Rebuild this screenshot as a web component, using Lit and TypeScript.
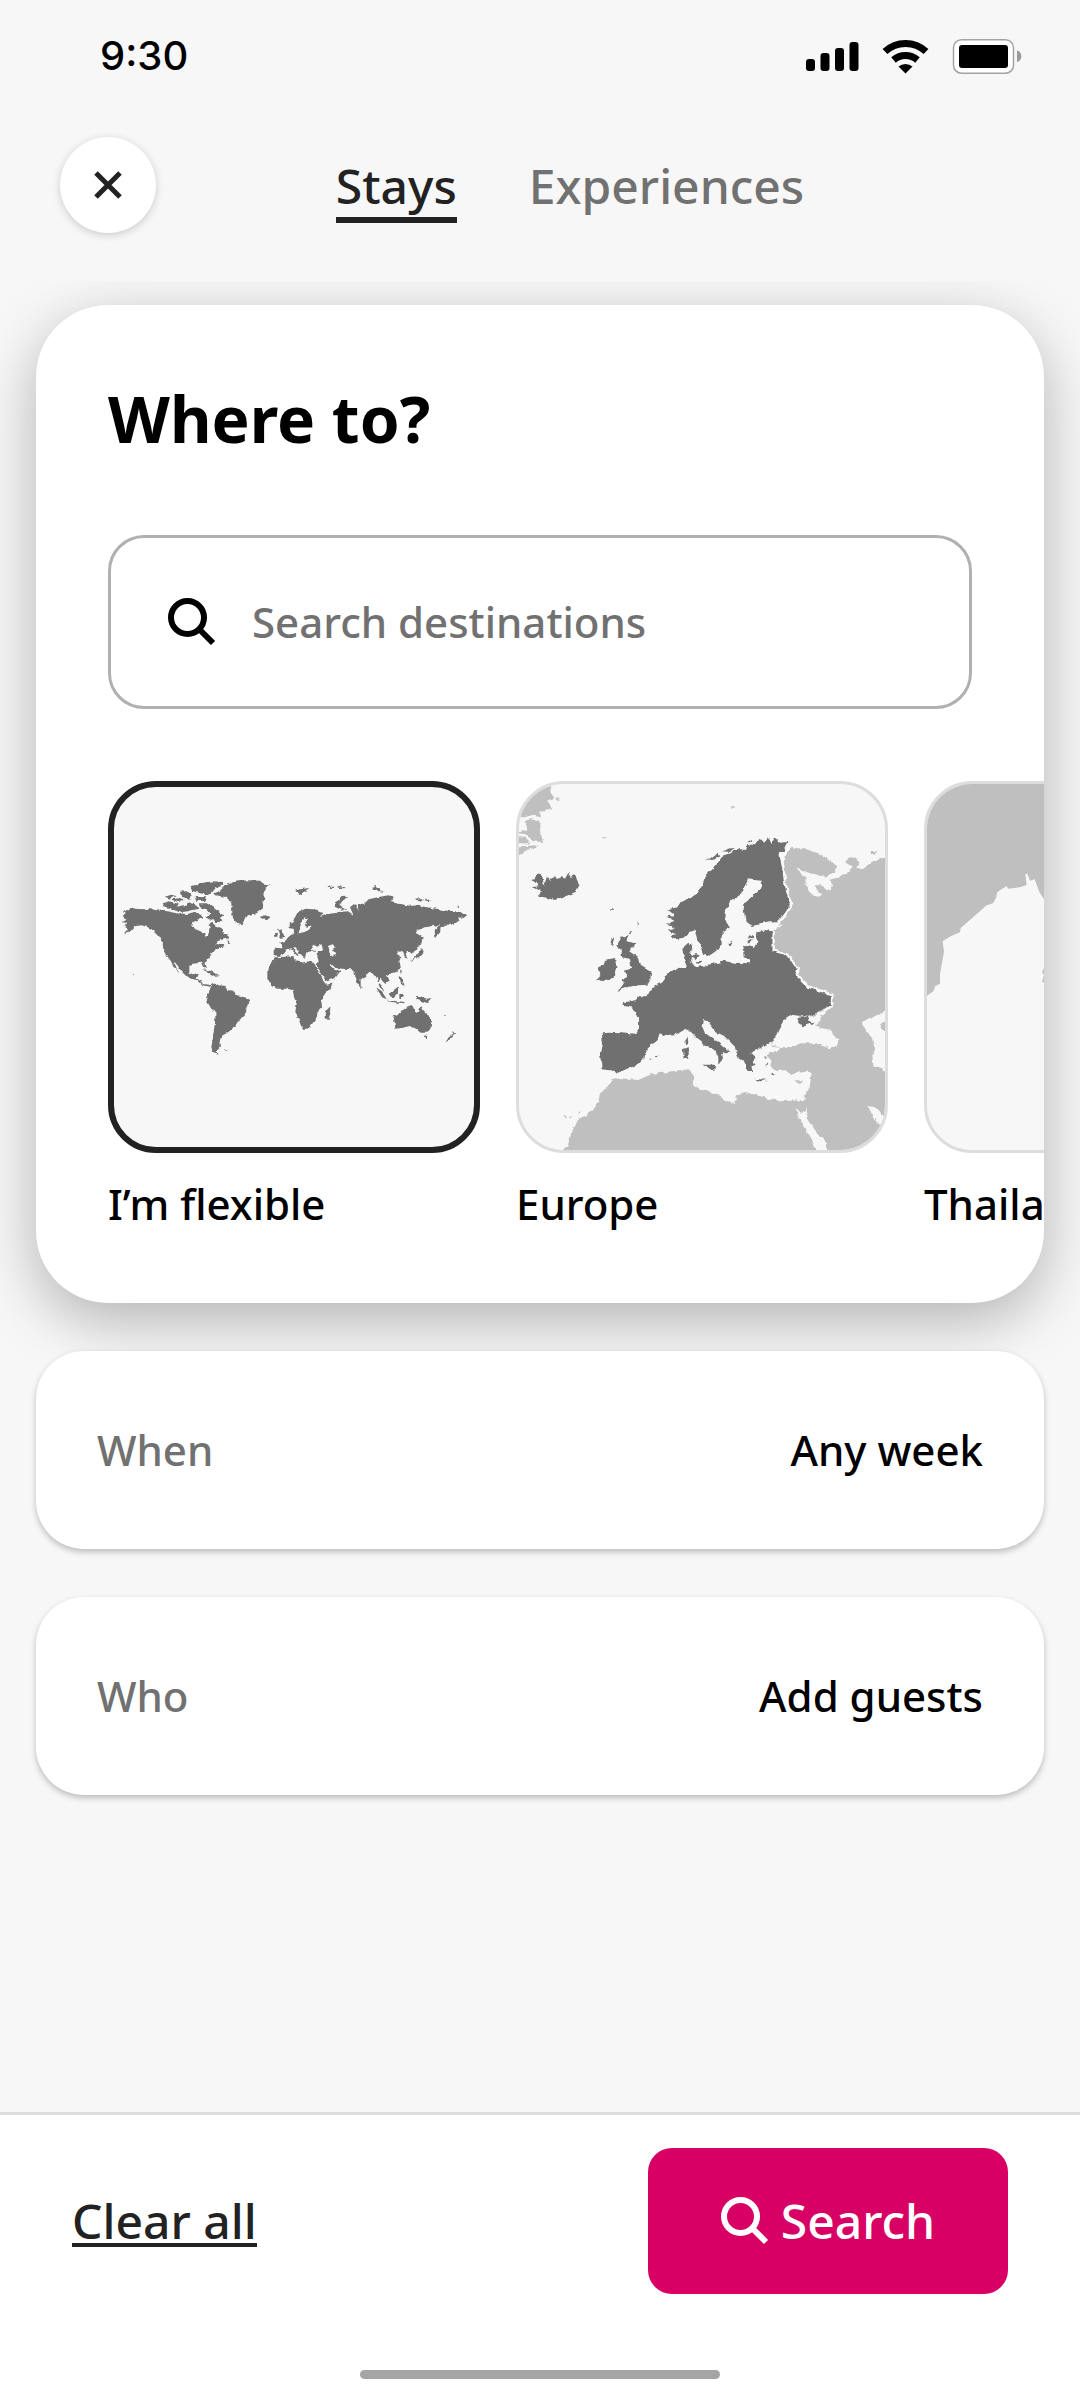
import { LitElement, html, svg, css } from "lit";
import { customElement, property, state } from "lit/decorators.js";
import { classMap } from "lit/directives/class-map.js";

const worldMap = svg`
  <svg class="map" viewBox="42 51 1080 1080" aria-hidden="true">
    <defs>
      <filter id="coast" x="0" y="0" width="1" height="1" color-interpolation-filters="sRGB">
        <feTurbulence type="fractalNoise" baseFrequency="0.07" numOctaves="2" seed="4" />
        <feDisplacementMap in="SourceGraphic" scale="12" xChannelSelector="R" yChannelSelector="G" />
      </filter>
    </defs>
    <g filter="url(#coast)">
      <g fill="#707070">
        <path d="M66 425 80 422 98 413 112 417 150 418 180 422 200 424 230 430 262 432 285 425 300 432 308 445 292 450 280 456 276 470 292 480 312 488 316 500 324 498 326 484 332 472 326 460 334 456 350 470 362 474 368 486 380 490 388 504 372 508 352 514 346 524 360 518 374 528 358 534 346 540 334 550 328 562 318 574 314 582 318 596 312 590 306 578 290 580 274 582 268 596 268 610 278 616 288 610 296 612 290 626 304 632 308 642 326 644 338 646 326 650 308 646 296 632 276 626 256 616 244 604 232 586 222 574 228 590 238 606 222 592 212 572 196 552 190 540 188 520 180 502 168 488 156 478 140 470 120 466 104 470 90 484 72 490 84 476 70 468 80 462 68 456 82 448 66 438 82 432Z" />
        <path d="M380 510 394 516 388 522Z" />
        <path d="M345 376 340 370 360 362 374 348 400 336 440 331 484 332 492 344 514 346 496 356 490 372 496 384 488 398 490 414 472 428 444 436 434 448 424 466 410 460 398 440 396 420 398 408 390 392 376 380Z" />
        <path d="M272 352 300 340 340 334 370 336 366 346 344 358 330 374 310 372 296 368 276 364Z" />
        <path d="M194 380 214 374 228 378 210 386ZM240 366 264 362 278 376 268 386 244 380ZM214 388 240 384 256 392 236 396ZM284 380 318 382 314 394 288 392ZM188 400 210 394 236 402 230 410 260 404 264 396 290 404 298 416 280 420 250 426 220 418 194 410Z" />
        <path d="M296 400 320 400 340 412 356 426 370 436 360 444 368 456 350 456 330 448 316 440 332 430 318 418 300 412Z" />
        <path d="M480 440 496 436 510 442 502 450 484 448ZM584 362 600 358 628 354 614 364 604 376 596 370ZM682 350 702 350 702 354 684 354ZM712 348 738 350 732 355 714 353ZM816 354 828 347 836 356 854 368 836 366ZM948 386 964 384 972 390 958 396ZM976 389 988 389 988 393 976 393ZM1070 410 1080 411 1078 415Z" />
        <path d="M704 410 710 392 724 382 748 379 732 389 718 398 724 412 742 420 720 418Z" />
        <path d="M306 598 324 600 342 610 360 616 344 618 326 608Z" />
        <path d="M318 684 330 658 334 644 346 640 356 646 376 648 384 660 400 662 406 674 428 680 448 690 446 706 436 720 434 738 418 746 406 768 390 782 380 790 368 796 362 808 358 820 360 832 350 844 356 854 340 850 334 832 338 806 342 780 346 750 346 726 334 716 324 700Z" />
        <path d="M502 598 514 576 528 562 556 560 580 558 584 570 606 578 620 574 644 578 648 592 660 612 672 636 680 644 698 640 690 658 676 674 662 690 666 708 652 728 650 744 636 766 622 776 606 776 596 748 586 726 590 700 582 682 578 660 560 656 530 656 512 644 502 626Z" />
        <path d="M678 722 690 710 694 720 686 746 677 746Z" />
        <path d="M566 474 566 460 580 452 592 428 616 416 640 418 668 430 660 440 690 432 716 426 744 424 760 434 750 412 762 402 776 420 772 402 790 404 806 388 840 380 866 376 878 384 872 396 900 402 930 408 950 406 980 412 1010 416 1040 422 1070 424 1090 430 1100 438 1090 444 1078 442 1080 450 1060 464 1036 464 1022 474 1020 488 1006 502 1004 480 1020 462 1000 468 974 472 950 482 950 492 962 498 964 516 950 540 932 548 920 544 920 556 926 566 916 564 910 550 896 544 890 552 904 560 898 572 902 590 890 606 868 612 858 616 866 632 856 642 842 626 836 634 846 650 854 666 840 652 832 628 822 608 808 606 790 622 782 630 782 648 774 644 762 604 752 598 728 596 706 594 694 582 690 586 704 600 722 602 706 624 678 634 664 612 650 584 656 574 652 558 654 546 634 544 620 548 614 564 602 552 584 532 578 534 598 554 592 558 574 538 556 542 548 554 536 558 524 556 524 536 546 538 548 526 540 518 556 512 566 500 580 490 582 476Z" />
        <path d="M534 476 544 480 554 500 538 504 540 492ZM522 490 534 488 532 500 522 500Z" />
        <path d="M966 530 971 546 956 562 930 574 950 556 960 544ZM960 492 968 502 964 522 960 516ZM900 598 906 604 902 612ZM898 620 908 626 914 650 902 636Z" />
        <path d="M866 672 892 652 896 664 886 682 872 680ZM828 652 846 664 860 688 846 682ZM858 690 884 693 914 696 912 700 872 696ZM898 672 912 672 904 688 898 686ZM944 678 960 678 980 686 996 684 984 700 966 694 950 688ZM782 644 788 650 783 654Z" />
        <path d="M880 740 900 730 916 714 938 708 944 722 956 726 962 706 972 722 984 734 994 750 992 772 980 788 962 788 948 776 930 768 906 774 886 776 884 758ZM970 796 982 798 976 806ZM1056 782 1066 792 1052 806 1036 818 1046 802 1060 794Z" />
        <path d="M98 611h4v3h-4zM376 838h5v4h-5zM1032 733h5v4h-5z" />
      </g>
      <g fill="#f7f7f7">
        <path d="M596 490 602 464 614 442 624 446 612 464 620 470 636 466 630 476 614 486Z" />
        <path d="M630 540 640 524 652 530 664 522 670 540 654 544ZM684 528 700 522 704 532 696 540 707 556 692 558 688 544Z" />
      </g>
    </g>
  </svg>
`;

const europeMap = svg`
  <svg class="map" viewBox="42 42 1098 1098" aria-hidden="true">
    <defs>
      <filter id="shore" x="0" y="0" width="1" height="1" color-interpolation-filters="sRGB">
        <feTurbulence type="fractalNoise" baseFrequency="0.06" numOctaves="2" seed="9" />
        <feDisplacementMap in="SourceGraphic" scale="14" xChannelSelector="R" yChannelSelector="G" />
      </filter>
    </defs>
    <g filter="url(#shore)">
      <g fill="#bfbfbf">
        <path d="M846 240 862 234 900 236 940 250 976 270 996 290 990 304 964 322 938 314 910 308 884 296 872 292 880 304 902 320 900 340 920 376 940 380 950 372 932 362 930 346 948 346 976 362 984 346 972 330 1000 322 1028 308 1040 290 1026 280 1030 262 1060 264 1066 280 1050 290 1070 298 1086 284 1110 272 1160 256V1160H170L200 1090 220 1048 260 1026 278 1000 286 970 310 950 328 922 360 926 400 930 440 912 500 904 552 898 568 920 560 946 590 960 630 970 660 990 690 1002 696 976 720 966 750 974 790 986 820 994 860 992 896 990 914 950 920 906 880 904 860 912 840 900 816 904 796 888 800 872 784 856 800 840 800 560 806 480Z" />
        <path d="M30 140 60 100 90 60 134 44 144 84 126 92 142 112 124 124 106 124 104 142 76 136 60 142ZM56 154 80 148 106 156 106 182 114 216 84 214 68 196 40 188 70 176ZM30 196 56 200 76 220 50 220 30 220ZM30 230 102 226 60 246 30 262ZM152 84 166 86 158 94Z" />
        <path d="M870 936 894 928 882 940ZM1094 242 1116 242 1112 252 1098 252ZM292 202h12v3h-12zM678 109h8v4h-8z" />
      </g>
      <g fill="#f7f7f7">
        <path d="M800 826 810 800 836 750 860 734 890 740 950 738 940 756 930 766 950 778 976 782 1000 808 996 828 970 834 930 820 890 820 862 828 840 834 816 832Z" />
        <path d="M780 842 800 830 826 834 820 842 796 846Z" />
        <path d="M1160 716 1110 738 1074 754 1076 772 1098 800 1112 838 1102 856 1106 888 1160 910Z" />
        <path d="M868 1010 890 1034 906 1014 904 1040 930 1080 964 1120 962 1160 940 1160 920 1110 890 1060ZM1088 1008 1112 1012 1134 1040 1160 1080 1120 1060 1104 1034Z" />
      </g>
      <path fill="#bfbfbf" d="M1160 740 1122 766 1130 776 1160 800Z" />
      <g fill="#707070">
        <path d="M290 790 310 788 350 790 392 794 402 770 402 746 392 724 372 708 352 704 356 696 392 694 396 680 410 682 430 672 440 654 468 640 490 606 520 596 546 590 536 560 532 536 552 520 562 530 552 546 562 558 556 580 580 590 620 582 660 574 690 578 736 580 734 568 716 562 714 534 728 524 748 532 758 512 750 490 780 480 804 484 804 540 850 552 878 600 870 616 912 650 980 672 978 704 950 720 910 740 864 734 836 750 820 780 808 810 790 822 760 838 736 848 752 864 740 872 752 884 736 888 742 908 722 898 720 878 702 868 690 830 660 800 630 786 612 754 594 750 590 766 600 790 640 816 676 846 664 850 650 842 654 866 640 884 640 860 630 842 600 826 570 800 544 776 520 790 490 796 464 790 456 814 436 826 418 850 414 872 380 890 350 904 336 914 324 902 290 898 286 860 294 820Z" />
        <path d="M494 498 512 492 488 482 510 476 486 462 510 454 486 440 508 434 486 418 520 412 530 396 566 378 590 350 600 320 630 290 650 262 700 236 720 240 726 222 750 226 764 206 776 220 790 204 800 222 808 204 822 218 850 216 838 240 822 250 834 280 836 330 848 376 858 404 824 450 780 460 740 468 722 456 714 404 740 380 772 354 770 332 728 328 712 370 680 392 660 420 658 450 678 472 650 490 650 524 640 540 612 560 598 556 590 530 576 506 570 480 556 486 534 504 510 508Z" />
        <path d="M598 268 620 264 640 248 646 256 626 270ZM652 244 668 236 690 234 672 246ZM724 214 748 210 740 218ZM550 384 576 378 566 390Z" />
        <path d="M346 500 372 496 364 512 388 520 376 546 396 560 412 590 438 606 436 626 430 644 400 646 370 650 340 662 360 636 350 630 368 620 356 602 380 596 374 566 350 562 350 540 334 530ZM370 488 380 486 376 496ZM320 506 328 502 322 526 316 522ZM398 456 402 460 398 468ZM316 418h8v4h-8z" />
        <path d="M300 570 330 564 334 590 326 622 290 634 274 626 290 612 276 596 296 588Z" />
        <path d="M80 332 98 310 112 322 118 348 126 322 136 332 150 318 156 328 170 318 180 326 190 308 196 320 208 316 224 344 212 366 180 378 150 390 120 382 98 380 110 364 80 352 106 348 94 336Z" />
        <path d="M548 800 550 822 542 826 538 812ZM534 836 552 832 550 866 536 868ZM592 884 630 884 628 904ZM746 926 768 928 786 930 766 934ZM450 856 464 854 458 862ZM432 866 440 866 436 870ZM670 518 682 512 676 530ZM572 552 584 556 574 568 562 560ZM572 574 590 572 582 580ZM734 492 746 500 728 506ZM726 512 744 508 734 520ZM778 858 786 862 782 868ZM782 880 790 882 786 890ZM802 912 812 912 806 918Z" />
        <path d="M874 744 906 740 910 752 930 758 910 764 890 772 886 758Z" />
        <path fill="#a8a8a8" d="M176 1036 186 1038 180 1042ZM194 1038 200 1036 200 1042ZM220 1032 228 1026 224 1036Z" />
      </g>
      <path fill="none" stroke="#fafafa" stroke-width="7" d="M856 222 852 236 826 250 834 290 840 330 850 376 862 404 826 456 760 474M806 484 806 542 850 554 880 600 874 614 912 650 982 674 980 706 930 744" />
      <path fill="#f7f7f7" d="M736 474 790 460 834 464 812 480 780 476 744 482Z" />
    </g>
  </svg>
`;

const thailandMap = svg`
  <svg class="map" viewBox="141 42 1098 1098" aria-hidden="true">
    <path fill="#bfbfbf" d="M141 42H1239V900L1100 860 960 700 820 640 700 560 600 520 540 440 504 404 492 388 478 366 464 328 450 332 442 311 436 312 440 345 420 352 384 356 380 348 352 366 348 384 340 399 318 407 280 441 242 474 240 487 212 499 188 514 192 545 186 579 180 611 180 641 166 648 160 664 141 677Z" />
    <path fill="#bfbfbf" d="M496 586 486 606 492 616 486 636 500 640Z" />
  </svg>
`;

const searchIcon = svg`
  <svg class="glass" viewBox="0 0 48 48" aria-hidden="true">
    <circle cx="19.5" cy="19.5" r="16.5" fill="none" stroke="currentColor" stroke-width="6" />
    <path d="M31 31 45 45" fill="none" stroke="currentColor" stroke-width="6" />
  </svg>
`;

interface Destination {
  name: string;
  map: unknown;
}

const destinations: Destination[] = [
  { name: "I’m flexible", map: worldMap },
  { name: "Europe", map: europeMap },
  { name: "Thailand", map: thailandMap },
];

const controls = css`
  * {
    box-sizing: border-box;
  }
  button,
  input {
    font: inherit;
    color: inherit;
    border: 0;
    padding: 0;
    margin: 0;
    background: none;
    cursor: pointer;
  }
  .glass {
    display: block;
    flex: none;
    width: 48px;
    height: 48px;
  }
`;

@customElement("status-bar")
class StatusBar extends LitElement {
  static styles = css`
    :host {
      display: flex;
      align-items: center;
      justify-content: space-between;
      height: 112px;
      padding: 0 56px 0 100px;
      font: 500 40px/48px Inter, "Liberation Sans", sans-serif;
      color: #000;
    }
    .icons {
      display: block;
      width: 220px;
      height: 36px;
    }
  `;

  render() {
    return html`
      <span>9:30</span>
      <svg class="icons" viewBox="0 0 220 36" role="img" aria-label="Signal, Wi-Fi and battery">
        <rect x="2" y="21" width="9" height="12" rx="3" />
        <rect x="16.500" y="15" width="9" height="18" rx="3" />
        <rect x="31" y="10" width="9" height="23" rx="3" />
        <rect x="45.500" y="4" width="9" height="29" rx="3" />
        <g fill="none" stroke="#000" stroke-width="7">
          <path d="M81 13.500a30 30 0 0 1 41 0" />
          <path d="M89.500 22a18.500 18.500 0 0 1 24 0" />
        </g>
        <path d="M94.500 28.500a11 11 0 0 1 14 0L101.500 35.500Z" />
        <rect x="149.500" y="1.700" width="60" height="33.500" rx="8" fill="#fff" stroke="#a3a3a3" stroke-width="1.500" />
        <rect x="155" y="7" width="49" height="23" rx="3" />
        <path d="M213 12.500a6 6 0 0 1 0 11.500z" fill="#999" />
      </svg>
    `;
  }
}

@customElement("destination-tile")
class DestinationTile extends LitElement {
  @property({ attribute: false }) destination!: Destination;
  @property({ type: Boolean }) selected = false;

  static styles = [
    controls,
    css`
      :host {
        display: block;
        flex: none;
        width: 372px;
        line-height: 60px;
      }
      .tile {
        display: flex;
        flex-direction: column;
        gap: 21px;
        width: 100%;
        text-align: left;
      }
      .frame {
        display: block;
        width: 100%;
        aspect-ratio: 1;
        overflow: hidden;
        border: 3px solid #ddd;
        border-radius: 48px;
        background: #f7f7f7;
      }
      .frame.selected {
        border: 6px solid #222;
      }
      .map {
        display: block;
        width: 100%;
        height: 100%;
      }
    `,
  ];

  render() {
    return html`
      <button class="tile" type="button" aria-pressed=${this.selected ? "true" : "false"}>
        <span class=${classMap({ frame: true, selected: this.selected })}>${this.destination.map}</span>
        <span>${this.destination.name}</span>
      </button>
    `;
  }
}

@customElement("app-root")
class AppRoot extends LitElement {
  @state() private tab = "Stays";
  @state() private picked = 0;

  static styles = [
    controls,
    css`
      :host {
        display: flex;
        flex-direction: column;
        min-height: 100vh;
        background: #f7f7f7;
        color: #000;
        font: 500 42px/48px "Noto Sans", "Open Sans", sans-serif;
      }
      .header {
        display: flex;
        align-items: center;
        padding: 25px 96px 48px 60px;
      }
      .close {
        display: grid;
        place-items: center;
        flex: none;
        width: 96px;
        height: 96px;
        border-radius: 50%;
        background: #fff;
        color: #222;
        box-shadow: 0 2px 8px rgba(0, 0, 0, 0.18);
      }
      .cross {
        width: 28px;
        height: 28px;
      }
      .tabs {
        display: flex;
        flex: 1;
        justify-content: center;
        gap: 72px;
        font-size: 48px;
        line-height: 60px;
      }
      .tab {
        padding: 9px 0 1px;
        border-bottom: 6px solid transparent;
        color: #717171;
      }
      .tab.active {
        color: #222;
        border-color: #222;
      }
      .content {
        display: flex;
        flex: 1;
        flex-direction: column;
        gap: 48px;
        padding: 24px 36px 48px;
        overflow: hidden;
      }
      .where {
        padding: 78px 0 69px;
        border-radius: 72px;
        background: #fff;
        box-shadow: 0 18px 60px rgba(0, 0, 0, 0.28);
        overflow: hidden;
      }
      .title {
        margin: 0 72px 80px;
        font-size: 64px;
        line-height: 72px;
        font-weight: 700;
      }
      .field {
        display: flex;
        align-items: center;
        gap: 36px;
        height: 174px;
        margin: 0 72px 72px;
        padding: 0 57px;
        border: 3px solid #b0b0b0;
        border-radius: 36px;
      }
      .query {
        flex: 1;
        min-width: 0;
        outline: none;
      }
      .query::placeholder {
        color: #717171;
        opacity: 1;
      }
      .tiles {
        display: flex;
        gap: 36px;
        padding: 0 72px;
        overflow-x: auto;
        scrollbar-width: none;
      }
      .row {
        display: flex;
        align-items: center;
        justify-content: space-between;
        height: 198px;
        padding: 0 61px;
        border-radius: 48px;
        background: #fff;
        box-shadow: 0 3px 6px rgba(0, 0, 0, 0.24);
      }
      .name {
        color: #717171;
      }
      .footer {
        padding: 33px 72px 21px;
        border-top: 3px solid #ddd;
        background: #fff;
      }
      .actions {
        display: flex;
        align-items: center;
        justify-content: space-between;
        font-size: 48px;
        line-height: 44px;
      }
      .clear {
        padding-top: 4px;
        color: #222;
        border-bottom: 4px solid #222;
      }
      .search {
        display: flex;
        align-items: center;
        justify-content: center;
        gap: 12px;
        width: 360px;
        height: 146px;
        border-radius: 24px;
        background: #d80064;
        color: #fff;
      }
      .handle {
        width: 360px;
        height: 9px;
        margin: 76px auto 0;
        border-radius: 5px;
        background: #a5a5a5;
      }
    `,
  ];

  render() {
    return html`
      <status-bar></status-bar>
      <header class="header">
        <button class="close" type="button" aria-label="Close">
          <svg class="cross" viewBox="0 0 28 28" aria-hidden="true">
            <path d="M2 2 26 26M26 2 2 26" stroke="currentColor" stroke-width="5" />
          </svg>
        </button>
        <nav class="tabs" role="tablist">
          ${["Stays", "Experiences"].map(
            (name) => html`
              <button
                class=${classMap({ tab: true, active: this.tab === name })}
                type="button"
                role="tab"
                aria-selected=${this.tab === name ? "true" : "false"}
                @click=${() => (this.tab = name)}
              >${name}</button>
            `
          )}
        </nav>
      </header>
      <main class="content">
        <section class="where">
          <h1 class="title">Where to?</h1>
          <label class="field">
            ${searchIcon}
            <input class="query" type="text" placeholder="Search destinations" aria-label="Search destinations" />
          </label>
          <div class="tiles">
            ${destinations.map(
              (item, i) => html`
                <destination-tile
                  .destination=${item}
                  .selected=${this.picked === i}
                  @click=${() => (this.picked = i)}
                ></destination-tile>
              `
            )}
          </div>
        </section>
        <button class="row" type="button"><span class="name">When</span><span>Any week</span></button>
        <button class="row" type="button"><span class="name">Who</span><span>Add guests</span></button>
      </main>
      <footer class="footer">
        <div class="actions">
          <button class="clear" type="button">Clear all</button>
          <button class="search" type="button">${searchIcon}<span>Search</span></button>
        </div>
        <div class="handle"></div>
      </footer>
    `;
  }
}
